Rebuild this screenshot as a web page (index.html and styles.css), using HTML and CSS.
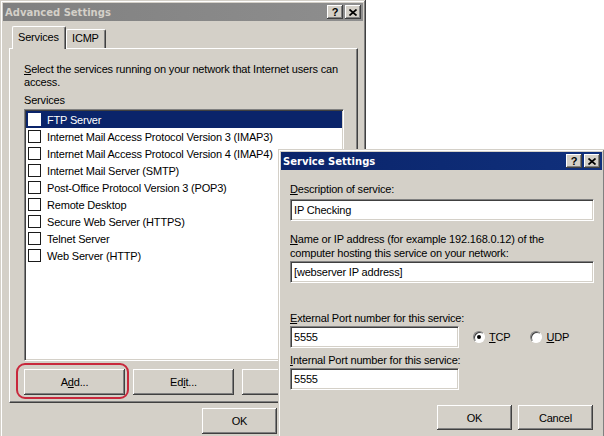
FILE: index.html
```html
<!DOCTYPE html>
<html lang="en">
  <head>
    <meta charset="UTF-8" />
    <title>Advanced Settings</title>
    <link rel="stylesheet" href="styles.css">
  </head>
  <body>
    <div class="desk">
      <!-- back window -->
      <div class="win win-back">
        <div class="titlebar inactive">
          <span class="title">Advanced Settings</span>
          <span class="tbtns">
            <span class="tbtn">?</span>
            <span class="tbtn close">
              <svg width="8" height="7" viewBox="0 0 8 7"><path d="M0.5 0.5 L7.5 6.5 M7.5 0.5 L0.5 6.5" stroke="#000" stroke-width="1.7" fill="none" /></svg>
            </span>
          </span>
        </div>

        <div class="tabs">
          <span class="tab sel">Services</span>
          <span class="tab">ICMP</span>
        </div>

        <div class="panel">
          <p class="intro"><u>S</u>elect the services running on your network that Internet users can<br />access.</p>
          <div class="lbl">Services</div>
          <ul class="list">
            <li class="on"><span class="cb"></span>FTP Server</li>
            <li><span class="cb"></span>Internet Mail Access Protocol Version 3 (IMAP3)</li>
            <li><span class="cb"></span>Internet Mail Access Protocol Version 4 (IMAP4)</li>
            <li><span class="cb"></span>Internet Mail Server (SMTP)</li>
            <li><span class="cb"></span>Post-Office Protocol Version 3 (POP3)</li>
            <li><span class="cb"></span>Remote Desktop</li>
            <li><span class="cb"></span>Secure Web Server (HTTPS)</li>
            <li><span class="cb"></span>Telnet Server</li>
            <li><span class="cb"></span>Web Server (HTTP)</li>
          </ul>
          <div class="btnrow">
            <span class="ringwrap">
              <button class="btn wide">A<u>d</u>d...</button>
              <span class="ring"></span>
            </span>
            <button class="btn wide">Ed<u>i</u>t...</button>
            <!-- third button sits under the front window -->
            <button class="btn wide"></button>
          </div>
        </div>

        <div class="foot">
          <button class="btn">OK</button>
          <button class="btn"></button>
        </div>
      </div>

      <!-- front window -->
      <div class="win win-front">
        <div class="titlebar active">
          <span class="title">Service Settings</span>
          <span class="tbtns">
            <span class="tbtn">?</span>
            <span class="tbtn close">
              <svg width="8" height="7" viewBox="0 0 8 7"><path d="M0.5 0.5 L7.5 6.5 M7.5 0.5 L0.5 6.5" stroke="#000" stroke-width="1.7" fill="none" /></svg>
            </span>
          </span>
        </div>

        <div class="form">
          <label class="flbl first"><u>D</u>escription of service:</label>
          <div class="field full">IP Checking</div>

          <label class="flbl two"><u>N</u>ame or IP address (for example 192.168.0.12) of the<br />computer hosting this service on your network:</label>
          <div class="field full">[webserver IP address]</div>

          <label class="flbl ext"><u>E</u>xternal Port number for this service:</label>
          <div class="portrow">
            <div class="field port">5555</div>
            <span class="radio on"></span><span class="rtxt"><u>T</u>CP</span>
            <span class="radio"></span><span class="rtxt"><u>U</u>DP</span>
          </div>

          <label class="flbl int"><u>I</u>nternal Port number for this service:</label>
          <div class="field port">5555</div>

          <div class="dlgbtns">
            <button class="btn">OK</button>
            <button class="btn">Cancel</button>
          </div>
        </div>
      </div>
    </div>
  </body>
</html>
```

FILE: styles.css
```css
* {
  margin: 0;
  padding: 0;
  box-sizing: border-box;
}

body {
  background: #fff;
  font-family: "Liberation Sans", Arial, sans-serif;
  font-size: 11px;
  letter-spacing: -0.18px;
  color: #000;
  overflow: hidden;
}

.desk {
  position: relative;
  width: 604px;
  height: 436px;
  overflow: hidden;
}

/* windows */
.win {
  background: #d4d0c8;
  padding: 3px;
  box-shadow: inset -1px -1px #404040, inset 1px 1px #d4d0c8,
    inset -2px -2px #808080, inset 2px 2px #fff;
}

.win-back {
  width: 366px;
  height: 470px;
}

.win-front {
  position: absolute;
  left: 278px;
  top: 149px;
  width: 327px;
  height: 320px;
}

.titlebar {
  height: 18px;
  display: flex;
  align-items: center;
  justify-content: space-between;
  padding: 0 2px 0 2px;
}

.titlebar.inactive {
  background: linear-gradient(90deg, #808080, #8e8e8e);
  color: #d4d0c8;
}

.titlebar.active {
  background: linear-gradient(90deg, #0a246a, #10307c);
  color: #fff;
}

.title {
  font-family: "DejaVu Sans", Verdana, sans-serif;
  font-weight: bold;
  font-size: 10px;
  letter-spacing: 0;
}

.tbtns {
  display: flex;
  gap: 2px;
}

.tbtn {
  width: 16px;
  height: 14px;
  background: #d4d0c8;
  color: #000;
  font-weight: bold;
  font-size: 11px;
  line-height: 14px;
  letter-spacing: 0;
  display: flex;
  align-items: center;
  justify-content: center;
  box-shadow: inset -1px -1px #404040, inset 1px 1px #fff,
    inset -2px -2px #808080;
}

/* tabs */
.tabs {
  display: flex;
  align-items: flex-end;
  height: 22px;
  margin-top: 5px;
  padding-left: 9px;
}

.tab {
  height: 19px;
  padding: 0 5px;
  line-height: 17px;
  background: #d4d0c8;
  border-top: 1px solid #fff;
  border-left: 1px solid #fff;
  border-right: 1px solid #404040;
  box-shadow: inset -1px 0 #808080;
  border-radius: 2px 2px 0 0;
}

.tab.sel {
  height: 23px;
  width: 54px;
  margin-bottom: -1px;
  padding: 0 0 0 5px;
  line-height: 20px;
  position: relative;
  z-index: 1;
}

.tab + .tab {
  width: 40px;
}

/* tab panel */
.panel {
  margin-left: 6px;
  width: 349px;
  height: 355px;
  padding: 14px 0 0 14px;
  border-top: 1px solid #fff;
  border-left: 1px solid #fff;
  border-right: 1px solid #404040;
  border-bottom: 1px solid #404040;
  box-shadow: inset -1px -1px #808080;
}

.intro {
  line-height: 13px;
}

.lbl {
  line-height: 13px;
  margin-top: 5px;
}

.list {
  list-style: none;
  margin-top: 2px;
  width: 320px;
  height: 252px;
  background: #fff;
  padding: 1px;
  border: 1px solid;
  border-color: #808080 #fff #fff #808080;
  box-shadow: inset 1px 1px #404040, inset -1px -1px #d4d0c8;
}

.list li {
  height: 17px;
  display: flex;
  align-items: center;
  padding-left: 2px;
}

.list li.on {
  background: #0a246a;
  color: #fff;
}

.cb {
  width: 13px;
  height: 13px;
  border: 1px solid #1a1a1a;
  background: #fff;
  margin-right: 6px;
}

.list li.on .cb {
  border-color: #fff;
}

.btnrow {
  display: flex;
  gap: 8px;
  margin-top: 8px;
}

.btn {
  font-family: inherit;
  font-size: 11px;
  letter-spacing: inherit;
  color: #000;
  width: 75px;
  height: 26px;
  background: #d4d0c8;
  border: none;
  box-shadow: inset -1px -1px #404040, inset 1px 1px #fff,
    inset -2px -2px #808080;
}

.btn.wide {
  width: 101px;
}

.ringwrap {
  position: relative;
  display: flex;
}

.ring {
  position: absolute;
  left: -8px;
  top: -6px;
  width: 113px;
  height: 36px;
  border: 2px solid #c8283c;
  border-radius: 9px;
}

.foot {
  display: flex;
  justify-content: flex-end;
  gap: 6px;
  margin-top: 5px;
  padding-right: 5px;
}

/* service settings form */
.form {
  padding-left: 9px;
}

.flbl {
  display: block;
  line-height: 14px;
}

.flbl.first {
  margin-top: 12px;
}

.flbl.two {
  margin-top: 11px;
}

.flbl.ext {
  margin-top: 28px;
}

.flbl.int {
  margin-top: 5px;
}

.field {
  background: #fff;
  height: 22px;
  line-height: 20px;
  padding-left: 3px;
  margin-top: 3px;
  border: 1px solid;
  border-color: #808080 #fff #fff #808080;
  box-shadow: inset 1px 1px #404040, inset -1px -1px #d4d0c8;
}

.field.full {
  width: 304px;
}

.flbl.two + .field,
.flbl.int + .field {
  margin-top: 1px;
}

.field.port {
  width: 169px;
}

.portrow {
  display: flex;
  align-items: center;
  margin-top: 1px;
}

.portrow .field {
  margin-top: 0;
}

.radio {
  width: 12px;
  height: 12px;
  border-radius: 50%;
  background: #fff;
  margin: 0 4px 0 14px;
  border: 1px solid;
  border-color: #808080 #fff #fff #808080;
  box-shadow: inset 1px 1px #404040;
  position: relative;
}

.radio.on::after {
  content: "";
  position: absolute;
  left: 3px;
  top: 3px;
  width: 4px;
  height: 4px;
  border-radius: 50%;
  background: #000;
}

.rtxt + .radio {
  margin-left: 20px;
}

.dlgbtns {
  display: flex;
  gap: 6px;
  margin-top: 15px;
  padding-left: 147px;
}

.dlgbtns .btn {
  height: 25px;
}
```
